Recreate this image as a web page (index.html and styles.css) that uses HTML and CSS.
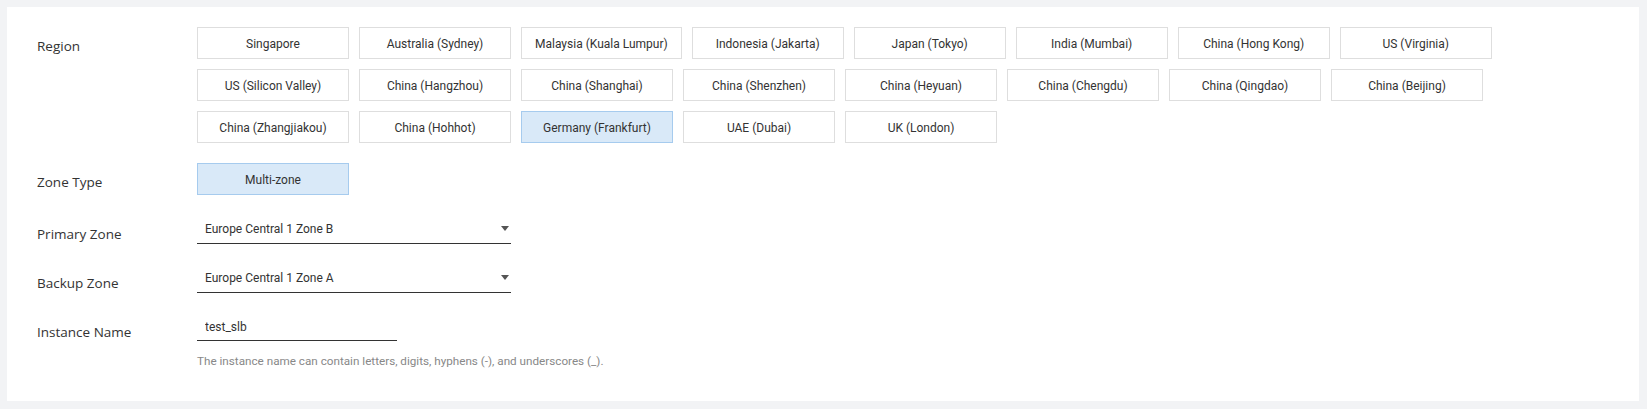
FILE: index.html
```html
<!DOCTYPE html>
<html lang="en">

<head>
    <meta charset="UTF-8">
    <meta name="viewport" content="width=device-width, initial-scale=1.0">
    <title>Create SLB Instance</title>
    <link rel="stylesheet" href="styles.css">
</head>

<body>
    <div class="panel">
        <div class="form-row">
            <div class="label">Region</div>
            <div class="options region-list">
                <button class="opt">Singapore</button>
                <button class="opt">Australia (Sydney)</button>
                <button class="opt">Malaysia (Kuala Lumpur)</button>
                <button class="opt">Indonesia (Jakarta)</button>
                <button class="opt">Japan (Tokyo)</button>
                <button class="opt">India (Mumbai)</button>
                <button class="opt">China (Hong Kong)</button>
                <button class="opt">US (Virginia)</button>
                <button class="opt">US (Silicon Valley)</button>
                <button class="opt">China (Hangzhou)</button>
                <button class="opt">China (Shanghai)</button>
                <button class="opt">China (Shenzhen)</button>
                <button class="opt">China (Heyuan)</button>
                <button class="opt">China (Chengdu)</button>
                <button class="opt">China (Qingdao)</button>
                <button class="opt">China (Beijing)</button>
                <button class="opt">China (Zhangjiakou)</button>
                <button class="opt">China (Hohhot)</button>
                <button class="opt active">Germany (Frankfurt)</button>
                <button class="opt">UAE (Dubai)</button>
                <button class="opt">UK (London)</button>
            </div>
        </div>

        <div class="form-row zone-type">
            <div class="label">Zone Type</div>
            <div class="options">
                <button class="opt active">Multi-zone</button>
            </div>
        </div>

        <div class="form-row field-row">
            <div class="label">Primary Zone</div>
            <div class="select">
                <span>Europe Central 1 Zone B</span>
                <i class="caret"></i>
            </div>
        </div>

        <div class="form-row field-row">
            <div class="label">Backup Zone</div>
            <div class="select">
                <span>Europe Central 1 Zone A</span>
                <i class="caret"></i>
            </div>
        </div>

        <div class="form-row field-row name-row">
            <div class="label">Instance Name</div>
            <div class="field">
                <input class="text-input" type="text" value="test_slb">
                <p class="hint">The instance name can contain letters, digits, hyphens (-), and underscores (_).</p>
            </div>
        </div>
    </div>
</body>

</html>
```

FILE: styles.css
```css
:root {
    --bg: #f2f3f5;
    --text: #333;
    --muted: #888;
    --line: #dedede;
    --sel-bg: #d9e9f8;
    --sel-border: #a6cbee;
    --font: Roboto, "Liberation Sans", sans-serif;
    --label-font: "Open Sans", "Noto Sans", sans-serif;
}

body {
    margin: 0;
    padding: 7px 8px 8px 7px;
    background-color: var(--bg);
    font-family: var(--font);
    color: var(--text);
}

.panel {
    box-sizing: border-box;
    height: 394px;
    padding: 20px 30px 0 30px;
    background-color: #fff;
}

.form-row {
    display: flex;
    align-items: flex-start;
}

.label {
    width: 160px;
    flex-shrink: 0;
    padding-top: 9px;
    font-family: var(--label-font);
    font-size: 13.5px;
    line-height: 20px;
    color: var(--text);
}

.options {
    display: flex;
    flex-wrap: wrap;
    gap: 10px;
}

.region-list {
    max-width: 1310px;
}

.opt {
    box-sizing: border-box;
    min-width: 152px;
    height: 32px;
    padding: 3px 13px 0 13px;
    border: 1px solid var(--line);
    background-color: #fff;
    font-family: var(--font);
    font-size: 12px;
    line-height: 27px;
    color: var(--text);
    cursor: pointer;
}

.opt.active {
    background-color: var(--sel-bg);
    border-color: var(--sel-border);
}

.zone-type {
    margin-top: 20px;
}

.field-row {
    margin-top: 17px;
}

.field-row .label {
    padding-top: 12px;
}

.name-row {
    margin-top: 16px;
}

.name-row .label {
    padding-top: 13px;
}

.select {
    box-sizing: border-box;
    display: flex;
    align-items: center;
    justify-content: space-between;
    width: 314px;
    height: 32px;
    padding: 4px 2px 0 8px;
    border-bottom: 1px solid #333;
    font-size: 12px;
    line-height: 27px;
    cursor: pointer;
}

.caret {
    width: 0;
    height: 0;
    margin-top: -2px;
    border-left: 4px solid transparent;
    border-right: 4px solid transparent;
    border-top: 5px solid #555;
}

.text-input {
    box-sizing: border-box;
    display: block;
    width: 200px;
    height: 32px;
    padding: 5px 8px 0 8px;
    border: none;
    border-bottom: 1px solid #333;
    outline: none;
    font-family: var(--font);
    font-size: 12px;
    color: var(--text);
    background: transparent;
}

.hint {
    margin: 12px 0 0 0;
    font-size: 11.7px;
    line-height: 16px;
    color: var(--muted);
}
```
